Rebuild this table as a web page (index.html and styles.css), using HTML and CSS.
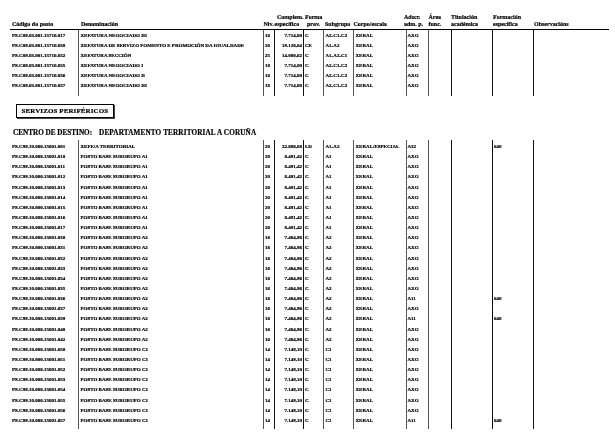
FILE: index.html
```html
<!DOCTYPE html>
<html lang="gl">
<head>
<meta charset="utf-8">
<title>RPT</title>
<link rel="stylesheet" href="styles.css">
</head>
<body>
<div class="page">
  <div class="head grid">
    <span class="h1">Código do posto</span>
    <span class="h2">Denominación</span>
    <span class="h3">Niv.</span>
    <span class="h4"><span class="up">Complem.</span><br>específico</span>
    <span class="h5">Forma<br><span class="in">prov.</span></span>
    <span class="h6">Subgrupo</span>
    <span class="h7">Corpo/escala</span>
    <span class="h8">Adscr.<br>adm. p.</span>
    <span class="h9">Área<br>func.</span>
    <span class="h10">Titulación<br>académica</span>
    <span class="h11">Formación<br>específica</span>
    <span class="h12">Observacións</span>
  </div>

  <div class="section s1">
    <div class="row sp top1"><span></span><span></span><span></span><span></span><span></span><span></span><span></span><span></span><span></span><span></span><span></span><span></span></div>
    <div class="row"><span>PS.C09.03.001.15710.017</span><span>XEFATURA NEGOCIADO III</span><span>18</span><span>7.714,00</span><span>C</span><span>A2-C1-C2</span><span>XERAL</span><span>AXG</span><span></span><span></span><span></span><span></span></div>
    <div class="row"><span>PS.C09.03.001.15710.030</span><span>XEFATURA DE SERVIZO FOMENTO E PROMOCIÓN DA IGUALDADE</span><span>28</span><span>19.120,64</span><span>CE</span><span>A1-A2</span><span>XERAL</span><span>AXG</span><span></span><span></span><span></span><span></span></div>
    <div class="row"><span>PS.C09.03.001.15710.032</span><span>XEFATURA SECCIÓN</span><span>25</span><span>14.080,62</span><span>C</span><span>A1-A2-C1</span><span>XERAL</span><span>AXG</span><span></span><span></span><span></span><span></span></div>
    <div class="row"><span>PS.C09.03.001.15710.035</span><span>XEFATURA NEGOCIADO I</span><span>18</span><span>7.714,00</span><span>C</span><span>A2-C1-C2</span><span>XERAL</span><span>AXG</span><span></span><span></span><span></span><span></span></div>
    <div class="row"><span>PS.C09.03.001.15710.036</span><span>XEFATURA NEGOCIADO II</span><span>18</span><span>7.714,00</span><span>C</span><span>A2-C1-C2</span><span>XERAL</span><span>AXG</span><span></span><span></span><span></span><span></span></div>
    <div class="row"><span>PS.C09.03.001.15710.037</span><span>XEFATURA NEGOCIADO III</span><span>18</span><span>7.714,00</span><span>C</span><span>A2-C1-C2</span><span>XERAL</span><span>AXG</span><span></span><span></span><span></span><span></span></div>
    <div class="row sp bot1"><span></span><span></span><span></span><span></span><span></span><span></span><span></span><span></span><span></span><span></span><span></span><span></span></div>
  </div>

  <div class="boxwrap"><div class="box">SERVIZOS PERIFÉRICOS</div></div>

  <div class="centro"><span class="lab">CENTRO DE DESTINO:</span><span class="val">DEPARTAMENTO TERRITORIAL A CORUÑA</span></div>

  <div class="section s2">
    <div class="row sp top2"><span></span><span></span><span></span><span></span><span></span><span></span><span></span><span></span><span></span><span></span><span></span><span></span></div>
    <div class="row"><span>PS.C99.10.000.15001.001</span><span>XEFE/A TERRITORIAL</span><span>28</span><span>22.680,88</span><span>LD</span><span>A1-A2</span><span>XERAL/ESPECIAL</span><span>A32</span><span></span><span></span><span>640</span><span></span></div>
    <div class="row"><span>PS.C99.10.000.15001.010</span><span>POSTO BASE SUBGRUPO A1</span><span>20</span><span>8.491,42</span><span>C</span><span>A1</span><span>XERAL</span><span>AXG</span><span></span><span></span><span></span><span></span></div>
    <div class="row"><span>PS.C99.10.000.15001.011</span><span>POSTO BASE SUBGRUPO A1</span><span>20</span><span>8.491,42</span><span>C</span><span>A1</span><span>XERAL</span><span>AXG</span><span></span><span></span><span></span><span></span></div>
    <div class="row"><span>PS.C99.10.000.15001.012</span><span>POSTO BASE SUBGRUPO A1</span><span>20</span><span>8.491,42</span><span>C</span><span>A1</span><span>XERAL</span><span>AXG</span><span></span><span></span><span></span><span></span></div>
    <div class="row"><span>PS.C99.10.000.15001.013</span><span>POSTO BASE SUBGRUPO A1</span><span>20</span><span>8.491,42</span><span>C</span><span>A1</span><span>XERAL</span><span>AXG</span><span></span><span></span><span></span><span></span></div>
    <div class="row"><span>PS.C99.10.000.15001.014</span><span>POSTO BASE SUBGRUPO A1</span><span>20</span><span>8.491,42</span><span>C</span><span>A1</span><span>XERAL</span><span>AXG</span><span></span><span></span><span></span><span></span></div>
    <div class="row"><span>PS.C99.10.000.15001.015</span><span>POSTO BASE SUBGRUPO A1</span><span>20</span><span>8.491,42</span><span>C</span><span>A1</span><span>XERAL</span><span>AXG</span><span></span><span></span><span></span><span></span></div>
    <div class="row"><span>PS.C99.10.000.15001.016</span><span>POSTO BASE SUBGRUPO A1</span><span>20</span><span>8.491,42</span><span>C</span><span>A1</span><span>XERAL</span><span>AXG</span><span></span><span></span><span></span><span></span></div>
    <div class="row"><span>PS.C99.10.000.15001.017</span><span>POSTO BASE SUBGRUPO A1</span><span>20</span><span>8.491,42</span><span>C</span><span>A1</span><span>XERAL</span><span>AXG</span><span></span><span></span><span></span><span></span></div>
    <div class="row"><span>PS.C99.10.000.15001.030</span><span>POSTO BASE SUBGRUPO A2</span><span>16</span><span>7.404,96</span><span>C</span><span>A2</span><span>XERAL</span><span>AXG</span><span></span><span></span><span></span><span></span></div>
    <div class="row"><span>PS.C99.10.000.15001.031</span><span>POSTO BASE SUBGRUPO A2</span><span>16</span><span>7.404,96</span><span>C</span><span>A2</span><span>XERAL</span><span>AXG</span><span></span><span></span><span></span><span></span></div>
    <div class="row"><span>PS.C99.10.000.15001.032</span><span>POSTO BASE SUBGRUPO A2</span><span>16</span><span>7.404,96</span><span>C</span><span>A2</span><span>XERAL</span><span>AXG</span><span></span><span></span><span></span><span></span></div>
    <div class="row"><span>PS.C99.10.000.15001.033</span><span>POSTO BASE SUBGRUPO A2</span><span>16</span><span>7.404,96</span><span>C</span><span>A2</span><span>XERAL</span><span>AXG</span><span></span><span></span><span></span><span></span></div>
    <div class="row"><span>PS.C99.10.000.15001.034</span><span>POSTO BASE SUBGRUPO A2</span><span>16</span><span>7.404,96</span><span>C</span><span>A2</span><span>XERAL</span><span>AXG</span><span></span><span></span><span></span><span></span></div>
    <div class="row"><span>PS.C99.10.000.15001.035</span><span>POSTO BASE SUBGRUPO A2</span><span>16</span><span>7.404,96</span><span>C</span><span>A2</span><span>XERAL</span><span>AXG</span><span></span><span></span><span></span><span></span></div>
    <div class="row"><span>PS.C99.10.000.15001.036</span><span>POSTO BASE SUBGRUPO A2</span><span>16</span><span>7.404,96</span><span>C</span><span>A2</span><span>XERAL</span><span>A11</span><span></span><span></span><span>640</span><span></span></div>
    <div class="row"><span>PS.C99.10.000.15001.037</span><span>POSTO BASE SUBGRUPO A2</span><span>16</span><span>7.404,96</span><span>C</span><span>A2</span><span>XERAL</span><span>AXG</span><span></span><span></span><span></span><span></span></div>
    <div class="row"><span>PS.C99.10.000.15001.039</span><span>POSTO BASE SUBGRUPO A2</span><span>16</span><span>7.404,96</span><span>C</span><span>A2</span><span>XERAL</span><span>A11</span><span></span><span></span><span>640</span><span></span></div>
    <div class="row"><span>PS.C99.10.000.15001.040</span><span>POSTO BASE SUBGRUPO A2</span><span>16</span><span>7.404,96</span><span>C</span><span>A2</span><span>XERAL</span><span>AXG</span><span></span><span></span><span></span><span></span></div>
    <div class="row"><span>PS.C99.10.000.15001.042</span><span>POSTO BASE SUBGRUPO A2</span><span>16</span><span>7.404,96</span><span>C</span><span>A2</span><span>XERAL</span><span>AXG</span><span></span><span></span><span></span><span></span></div>
    <div class="row"><span>PS.C99.10.000.15001.050</span><span>POSTO BASE SUBGRUPO C1</span><span>14</span><span>7.149,10</span><span>C</span><span>C1</span><span>XERAL</span><span>AXG</span><span></span><span></span><span></span><span></span></div>
    <div class="row"><span>PS.C99.10.000.15001.051</span><span>POSTO BASE SUBGRUPO C1</span><span>14</span><span>7.149,10</span><span>C</span><span>C1</span><span>XERAL</span><span>AXG</span><span></span><span></span><span></span><span></span></div>
    <div class="row"><span>PS.C99.10.000.15001.052</span><span>POSTO BASE SUBGRUPO C1</span><span>14</span><span>7.149,10</span><span>C</span><span>C1</span><span>XERAL</span><span>AXG</span><span></span><span></span><span></span><span></span></div>
    <div class="row"><span>PS.C99.10.000.15001.053</span><span>POSTO BASE SUBGRUPO C1</span><span>14</span><span>7.149,10</span><span>C</span><span>C1</span><span>XERAL</span><span>AXG</span><span></span><span></span><span></span><span></span></div>
    <div class="row"><span>PS.C99.10.000.15001.054</span><span>POSTO BASE SUBGRUPO C1</span><span>14</span><span>7.149,10</span><span>C</span><span>C1</span><span>XERAL</span><span>AXG</span><span></span><span></span><span></span><span></span></div>
    <div class="row"><span>PS.C99.10.000.15001.055</span><span>POSTO BASE SUBGRUPO C1</span><span>14</span><span>7.149,10</span><span>C</span><span>C1</span><span>XERAL</span><span>AXG</span><span></span><span></span><span></span><span></span></div>
    <div class="row"><span>PS.C99.10.000.15001.056</span><span>POSTO BASE SUBGRUPO C1</span><span>14</span><span>7.149,10</span><span>C</span><span>C1</span><span>XERAL</span><span>AXG</span><span></span><span></span><span></span><span></span></div>
    <div class="row"><span>PS.C99.10.000.15001.057</span><span>POSTO BASE SUBGRUPO C1</span><span>14</span><span>7.149,10</span><span>C</span><span>C1</span><span>XERAL</span><span>A11</span><span></span><span></span><span>640</span><span></span></div>
    <div class="row sp bot2"><span></span><span></span><span></span><span></span><span></span><span></span><span></span><span></span><span></span><span></span><span></span><span></span></div>
  </div>
</div>
</body>
</html>
```

FILE: styles.css
```css
html, body {
  margin: 0;
  padding: 0;
  background: #fff;
}

body {
  font-family: "Liberation Serif", "Times New Roman", serif;
  font-weight: bold;
  color: #000;
  width: 615px;
  height: 439px;
  overflow: hidden;
}

.page {
  padding: 13px 0 0 12px;
  height: 439px;
  box-sizing: border-box;
  opacity: 0.999;
  will-change: opacity;
  color: #000;
  -webkit-text-stroke: 0.2px #000;
}

.grid,
.row {
  display: grid;
  grid-template-columns: 66px 184.5px 11.5px 29px 20px 30px 52.5px 22.5px 22.5px 41.5px 41px 74px;
}

/* header */
.head {
  font-size: 6px;
  line-height: 7px;
  margin-left: -2px;
  padding-left: 2px;
  padding-bottom: 1px;
  width: 597px;
  border-bottom: 1px solid #000;
  align-items: end;
  white-space: nowrap;
  margin-top: 1px;
}

.head > span {
  align-self: end;
}

.h2 { padding-left: 3px; }
.h3 { padding-left: 1px; }
.h4 { padding-left: 0.5px; }
.h4 .up { padding-left: 2.5px; }
.h5 { padding-left: 2px; }
.h5 .in { padding-left: 2px; }
.h6 { padding-left: 2px; }
.h7 { padding-left: 0.5px; }
.h8 { padding-left: 0; margin-left: -1.5px; }
.h9 { padding-left: 0.5px; }
.h10 { padding-left: 0.5px; }
.h11 { padding-left: 1px; }
.h12 { padding-left: 1px; }

/* data rows */
.row {
  font-size: 5px;
  white-space: nowrap;
}

.s1 .row { height: 10px; line-height: 10px; }
.s2 .row { height: 10.15px; line-height: 10.15px; }

.row > span {
  box-sizing: border-box;
  overflow: visible;
}

.row > span:nth-child(n+2) {
  border-left: 1px solid #111;
}

.row > span:nth-child(2),
.row > span:nth-child(3),
.row > span:nth-child(6),
.row > span:nth-child(7),
.row > span:nth-child(8),
.row > span:nth-child(9) {
  border-left-color: #555;
}

.row > span:nth-child(2) { padding-left: 1.5px; }
.row > span:nth-child(3) { padding-left: 1.5px; }
.row > span:nth-child(4) { text-align: right; padding-right: 1px; }
.row > span:nth-child(5) { padding-left: 1px; }
.row > span:nth-child(6) { padding-left: 1.5px; }
.row > span:nth-child(7) { padding-left: 1.5px; }
.row > span:nth-child(8) { padding-left: 1px; }
.row > span:nth-child(11) { padding-left: 1px; }

.s1 .row.top1 { height: 1px; }
.s1 .row.bot1 { height: 5px; }
.s2 .row.top2 { height: 2px; }
.s2 .row.bot2 { height: 3px; }

/* section box */
.boxwrap {
  display: flex;
  padding: 8px 0 0 4px;
}

.box {
  font-size: 7px;
  line-height: 12px;
  padding: 0 5px 0 4.5px;
  border: 1px solid #000;
  box-shadow: 1px 1px 0 #444;
  letter-spacing: 0.1px;
}

.centro {
  margin-top: 10px;
  margin-bottom: 2px;
  font-size: 7.2px;
  line-height: 10px;
  padding-left: 1px;
  white-space: nowrap;
}

.centro .lab {
  letter-spacing: 0;
}

.centro .val {
  margin-left: 7px;
  letter-spacing: 0.15px;
}
```
